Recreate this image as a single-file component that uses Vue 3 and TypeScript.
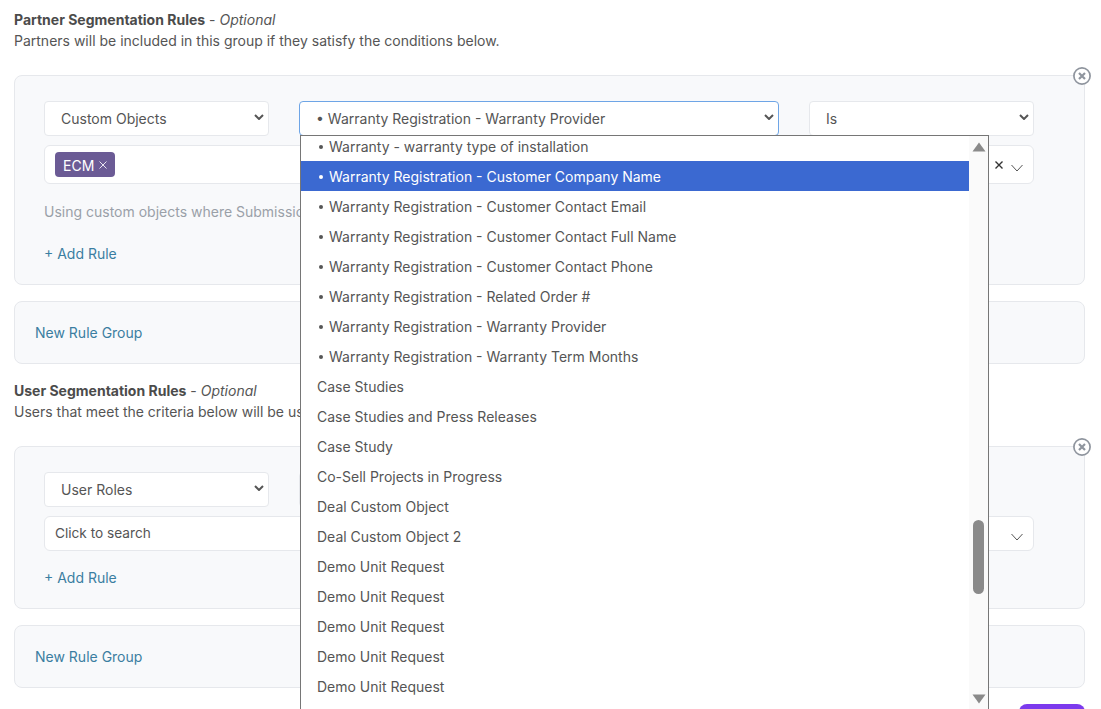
<script setup lang="ts">
interface Row { label: string; child: boolean; active?: boolean }
const children = [
  'Warranty - warranty type of installation',
  'Warranty Registration - Customer Company Name',
  'Warranty Registration - Customer Contact Email',
  'Warranty Registration - Customer Contact Full Name',
  'Warranty Registration - Customer Contact Phone',
  'Warranty Registration - Related Order #',
  'Warranty Registration - Warranty Provider',
  'Warranty Registration - Warranty Term Months',
]
const tops = [
  'Case Studies',
  'Case Studies and Press Releases',
  'Case Study',
  'Co-Sell Projects in Progress',
  'Deal Custom Object',
  'Deal Custom Object 2',
  'Demo Unit Request',
  'Demo Unit Request',
  'Demo Unit Request',
  'Demo Unit Request',
  'Demo Unit Request',
]
const rows: Row[] = [
  ...children.map((label, i) => ({ label, child: true, active: i === 1 })),
  ...tops.map((label) => ({ label, child: false })),
]
</script>

<template>
  <div class="page">
    <section class="head">
      <div class="title"><b>Partner Segmentation Rules</b> - <i>Optional</i></div>
      <div class="sub">Partners will be included in this group if they satisfy the conditions below.</div>
    </section>

    <div class="card rule first">
      <svg class="close" viewBox="0 0 18 18" width="18" height="18">
        <circle cx="9" cy="9" r="8.1" fill="#fff" stroke="#8f959e" stroke-width="1.7" />
        <path d="M6 6l6 6M12 6l-6 6" stroke="#8f959e" stroke-width="2.2" />
      </svg>
      <div class="selects">
        <label class="field small">
          <select class="sel"><option>Custom Objects</option></select>
          <svg class="chev" width="10" height="6" viewBox="0 0 10 6"><path d="M1 1l4 4 4-4" fill="none" stroke="#555" stroke-width="2" /></svg>
        </label>
        <label class="field wide">
          <select class="sel focus"><option>• Warranty Registration - Warranty Provider</option></select>
          <svg class="chev" width="10" height="6" viewBox="0 0 10 6"><path d="M1 1l4 4 4-4" fill="none" stroke="#555" stroke-width="2" /></svg>
        </label>
        <label class="field small">
          <select class="sel"><option>Is</option></select>
          <svg class="chev" width="10" height="6" viewBox="0 0 10 6"><path d="M1 1l4 4 4-4" fill="none" stroke="#555" stroke-width="2" /></svg>
        </label>
      </div>
      <div class="multi tall">
        <span class="tag">ECM
          <svg width="8" height="8" viewBox="0 0 8 8"><path d="M0.5 0.5l7 7M7.5 0.5l-7 7" stroke="#e8e4f0" stroke-width="1" /></svg>
        </span>
        <span class="multi-icons">
          <svg width="8" height="8" viewBox="0 0 8 8"><path d="M0.5 0.5l7 7M7.5 0.5l-7 7" stroke="#333" stroke-width="1.4" /></svg>
          <svg class="down-ic" width="12" height="8" viewBox="0 0 12 8"><path d="M0.5 1l5.5 6 5.5-6" fill="none" stroke="#555" stroke-width="1" /></svg>
        </span>
      </div>
      <div class="hint">Using custom objects where Submission</div>
      <a class="add"><span class="plus">+</span> Add Rule</a>
    </div>

    <div class="card group"><a class="link">New Rule Group</a></div>

    <section class="head second">
      <div class="title"><b>User Segmentation Rules</b> - <i>Optional</i></div>
      <div class="sub">Users that meet the criteria below will be used</div>
    </section>

    <div class="card rule third">
      <svg class="close" viewBox="0 0 18 18" width="18" height="18">
        <circle cx="9" cy="9" r="8.1" fill="#fff" stroke="#8f959e" stroke-width="1.7" />
        <path d="M6 6l6 6M12 6l-6 6" stroke="#8f959e" stroke-width="2.2" />
      </svg>
      <div class="selects">
        <label class="field small">
          <select class="sel"><option>User Roles</option></select>
          <svg class="chev" width="10" height="6" viewBox="0 0 10 6"><path d="M1 1l4 4 4-4" fill="none" stroke="#555" stroke-width="2" /></svg>
        </label>
        <label class="field wide">
          <select class="sel"><option></option></select>
        </label>
      </div>
      <div class="multi">
        <span class="placeholder">Click to search</span>
        <span class="multi-icons">
          <svg class="down-ic low" width="12" height="8" viewBox="0 0 12 8"><path d="M0.5 1l5.5 6 5.5-6" fill="none" stroke="#555" stroke-width="1" /></svg>
        </span>
      </div>
      <a class="add near"><span class="plus">+</span> Add Rule</a>
    </div>

    <div class="card group"><a class="link">New Rule Group</a></div>

    <div class="actions"><button class="save" aria-label="Save"></button></div>

    <div class="dropdown">
      <ul class="list">
        <li v-for="(r, i) in rows" :key="i" class="row" :class="{ child: r.child, active: r.active }">
          <span v-if="r.child" class="dot"></span>{{ r.label }}
        </li>
      </ul>
      <div class="track">
        <svg class="arrow up" width="14" height="10" viewBox="0 0 14 10"><path d="M7 0.5L13.5 9.5H0.5z" fill="#8a8a8a" /></svg>
        <div class="thumb"></div>
        <svg class="arrow down" width="14" height="10" viewBox="0 0 14 10"><path d="M7 9.5L13.5 0.5H0.5z" fill="#8a8a8a" /></svg>
      </div>
    </div>
  </div>
</template>

<style>
html, body { margin: 0; background: #fff; overflow: hidden; }
</style>

<style scoped>
.page {
  position: relative;
  width: 1101px;
  height: 709px;
  overflow: hidden;
  box-sizing: border-box;
  padding: 9px 16px 0 14px;
  font-family: Inter, "Noto Sans", sans-serif;
  font-size: 14px;
  line-height: 21px;
  color: #555;
}
.head { height: 66px; }
.head.second { height: 82px; padding-top: 16px; box-sizing: border-box; }
.title b { font-weight: 700; color: #4b4b4b; }
.card {
  box-sizing: border-box;
  background: #f8f9fb;
  border: 1px solid #e6e8ec;
  border-radius: 8px;
  position: relative;
}
.rule { padding: 25px 50px 0 29px; }
.first { height: 210px; margin-bottom: 16px; }
.third { height: 163px; margin-bottom: 16px; }
.group { height: 63px; padding: 20px 20px 0; }
.close { position: absolute; top: -9px; right: -7px; }
.selects { display: flex; gap: 30px; }
.field { position: relative; display: block; flex: none; }
.small { width: 225px; }
.wide { width: 480px; }
.sel {
  appearance: none;
  display: block;
  width: 100%;
  box-sizing: border-box;
  height: 35px;
  background: #fff;
  border: 1px solid #e6e8ec;
  border-radius: 4px;
  padding: 0 16px;
  font: 14px Inter, "Noto Sans", sans-serif;
  color: #555;
  outline: none;
}
.focus { border-color: #6ea5e6; }
.chev { position: absolute; right: 5px; top: 13px; pointer-events: none; }
.multi {
  box-sizing: border-box;
  height: 35px;
  margin-top: 9px;
  background: #fff;
  border: 1px solid #e6e8ec;
  border-radius: 6px;
  display: flex;
  align-items: center;
  padding: 0 10px;
}
.multi.tall { height: 39px; }
.placeholder { font-size: 13.65px; padding-bottom: 1px; }
.tag {
  background: #6b5b95;
  color: #fff;
  border-radius: 4px;
  height: 25px;
  padding: 1px 8px 0;
  box-sizing: border-box;
  display: inline-flex;
  align-items: center;
  gap: 5px;
}
.multi-icons { margin-left: auto; display: flex; align-items: center; gap: 8px; }
.down-ic { margin-top: 6px; }
.down-ic.low { margin-top: 7px; }
.hint { margin-top: 17px; color: #9aa0a8; }
.add {
  display: block;
  margin-top: 21px;
  color: #3b7ea1;
}
.add.near { margin-top: 16px; }
.plus { color: #3b7ea1; }
.link { color: #3b7ea1; }
.actions { display: flex; justify-content: flex-end; padding-top: 16px; }
.save {
  width: 66px;
  height: 34px;
  border: 0;
  border-radius: 8px;
  background: #7c3aed;
}
.dropdown {
  position: absolute;
  left: 300px;
  top: 135px;
  width: 689px;
  height: 600px;
  box-sizing: border-box;
  background: #fff;
  border: 1px solid #767676;
  display: flex;
  overflow: hidden;
}
.list {
  list-style: none;
  margin: -5px 0 0;
  padding: 0;
  flex: 1;
}
.row {
  height: 30px;
  box-sizing: border-box;
  padding: 1px 0 0 16px;
  display: flex;
  align-items: center;
  white-space: pre;
  color: #555;
}
.dot {
  width: 4px;
  height: 4px;
  border-radius: 50%;
  background: currentColor;
  margin: 0 6px 0 2px;
}
.active { background: #3b69d1; color: #fff; }
.track {
  width: 19px;
  flex: none;
  background: #fafafa;
  position: relative;
}
.arrow { position: absolute; left: 3px; }
.up { top: 6px; }
.down { top: 558px; }
.thumb {
  position: absolute;
  left: 4px;
  top: 384px;
  width: 11px;
  height: 74px;
  border-radius: 6px;
  background: #8a8a8a;
}
</style>
